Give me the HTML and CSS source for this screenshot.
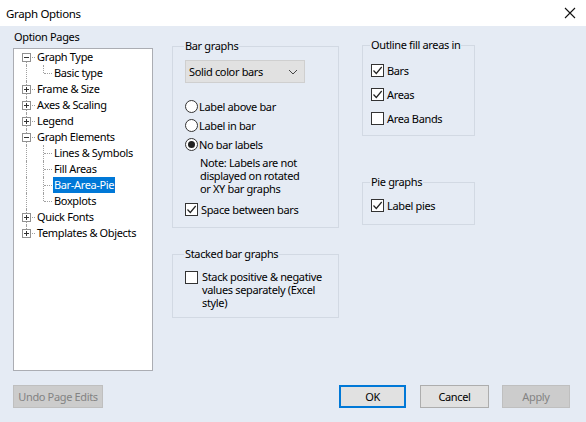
FILE: index.html
```html
<!DOCTYPE html>
<html>
<head>
<meta charset="utf-8">
<title>Graph Options</title>
<link rel="stylesheet" href="styles.css">
</head>
<body>
<div class="dialog">
  <div class="titlebar">
    <span class="title">Graph Options</span>
    <span class="close"><svg width="12" height="12" viewBox="0 0 12 12"><path d="M1 1 L11 11 M11 1 L1 11" stroke="#111" stroke-width="1.1" fill="none"/></svg></span>
  </div>
  <div class="main">
    <div class="left">
      <div class="pages-label">Option Pages</div>
      <div class="tree">
        <div class="row root first"><span class="g g-root"><span class="exp"><svg width="9" height="9" viewBox="0 0 9 9"><rect x="0.5" y="0.5" width="8" height="8" fill="#fff" stroke="#919191"/><path d="M2 4.5 H7" stroke="#333"/></svg></span></span><span class="lbl">Graph Type</span></div>
        <div class="row child last"><span class="g g-pass"></span><span class="g g-child"></span><span class="lbl">Basic type</span></div>
        <div class="row root"><span class="g g-root"><span class="exp"><svg width="9" height="9" viewBox="0 0 9 9"><rect x="0.5" y="0.5" width="8" height="8" fill="#fff" stroke="#919191"/><path d="M2 4.5 H7 M4.5 2 V7" stroke="#333"/></svg></span></span><span class="lbl">Frame &amp; Size</span></div>
        <div class="row root"><span class="g g-root"><span class="exp"><svg width="9" height="9" viewBox="0 0 9 9"><rect x="0.5" y="0.5" width="8" height="8" fill="#fff" stroke="#919191"/><path d="M2 4.5 H7 M4.5 2 V7" stroke="#333"/></svg></span></span><span class="lbl">Axes &amp; Scaling</span></div>
        <div class="row root"><span class="g g-root"><span class="exp"><svg width="9" height="9" viewBox="0 0 9 9"><rect x="0.5" y="0.5" width="8" height="8" fill="#fff" stroke="#919191"/><path d="M2 4.5 H7 M4.5 2 V7" stroke="#333"/></svg></span></span><span class="lbl">Legend</span></div>
        <div class="row root"><span class="g g-root"><span class="exp"><svg width="9" height="9" viewBox="0 0 9 9"><rect x="0.5" y="0.5" width="8" height="8" fill="#fff" stroke="#919191"/><path d="M2 4.5 H7" stroke="#333"/></svg></span></span><span class="lbl">Graph Elements</span></div>
        <div class="row child"><span class="g g-pass"></span><span class="g g-child"></span><span class="lbl">Lines &amp; Symbols</span></div>
        <div class="row child"><span class="g g-pass"></span><span class="g g-child"></span><span class="lbl">Fill Areas</span></div>
        <div class="row child"><span class="g g-pass"></span><span class="g g-child"></span><span class="lbl sel">Bar-Area-Pie</span></div>
        <div class="row child last"><span class="g g-pass"></span><span class="g g-child"></span><span class="lbl">Boxplots</span></div>
        <div class="row root"><span class="g g-root"><span class="exp"><svg width="9" height="9" viewBox="0 0 9 9"><rect x="0.5" y="0.5" width="8" height="8" fill="#fff" stroke="#919191"/><path d="M2 4.5 H7 M4.5 2 V7" stroke="#333"/></svg></span></span><span class="lbl">Quick Fonts</span></div>
        <div class="row root last"><span class="g g-root"><span class="exp"><svg width="9" height="9" viewBox="0 0 9 9"><rect x="0.5" y="0.5" width="8" height="8" fill="#fff" stroke="#919191"/><path d="M2 4.5 H7 M4.5 2 V7" stroke="#333"/></svg></span></span><span class="lbl">Templates &amp; Objects</span></div>
      </div>
    </div>

    <div class="col mid">
      <fieldset class="grp bar">
        <legend>Bar graphs</legend>
        <div class="select"><span>Solid color bars</span><svg width="10" height="6" viewBox="0 0 10 6"><path d="M1 1 L5 5 L9 1" stroke="#444" fill="none"/></svg></div>
        <div class="radios">
          <div class="opt radio-row"><span class="radio"></span><span>Label above bar</span></div>
          <div class="opt radio-row"><span class="radio"></span><span>Label in bar</span></div>
          <div class="opt radio-row"><span class="radio on"></span><span>No bar labels</span></div>
        </div>
        <div class="note">Note: Labels are not<br>displayed on rotated<br>or XY bar graphs</div>
        <div class="opt check-row space"><span class="check on"><svg width="11" height="11" viewBox="0 0 11 11"><path d="M1.5 5.5 L4.3 8.5 L9.7 2" stroke="#222" stroke-width="1.2" fill="none"/></svg></span><span>Space between bars</span></div>
      </fieldset>
      <fieldset class="grp stacked">
        <legend>Stacked bar graphs</legend>
        <div class="opt multi"><span class="check"></span><span class="mtext">Stack positive &amp; negative<br>values separately (Excel<br>style)</span></div>
      </fieldset>
    </div>

    <div class="col right">
      <fieldset class="grp outline">
        <legend>Outline fill areas in</legend>
        <div class="opt check-row tall"><span class="check on"><svg width="11" height="11" viewBox="0 0 11 11"><path d="M1.5 5.5 L4.3 8.5 L9.7 2" stroke="#222" stroke-width="1.2" fill="none"/></svg></span><span>Bars</span></div>
        <div class="opt check-row tall"><span class="check on"><svg width="11" height="11" viewBox="0 0 11 11"><path d="M1.5 5.5 L4.3 8.5 L9.7 2" stroke="#222" stroke-width="1.2" fill="none"/></svg></span><span>Areas</span></div>
        <div class="opt check-row tall"><span class="check"></span><span>Area Bands</span></div>
      </fieldset>
      <fieldset class="grp pie">
        <legend>Pie graphs</legend>
        <div class="opt check-row tall"><span class="check on"><svg width="11" height="11" viewBox="0 0 11 11"><path d="M1.5 5.5 L4.3 8.5 L9.7 2" stroke="#222" stroke-width="1.2" fill="none"/></svg></span><span>Label pies</span></div>
      </fieldset>
    </div>
  </div>
  <div class="footer">
    <button class="btn undo" disabled>Undo Page Edits</button>
    <div class="spacer"></div>
    <button class="btn ok">OK</button>
    <button class="btn cancel">Cancel</button>
    <button class="btn apply" disabled>Apply</button>
  </div>
</div>
</body>
</html>
```

FILE: styles.css
```css
* { box-sizing: border-box; }
html, body { margin: 0; padding: 0; }
body {
  width: 586px;
  height: 422px;
  overflow: hidden;
  font-family: "Noto Sans", "DejaVu Sans", sans-serif;
  font-size: 11px;
  letter-spacing: -0.35px;
  color: #000;
  background: #e5ebf4;
}
.dialog {
  width: 586px;
  height: 422px;
  display: flex;
  flex-direction: column;
  background: #e5ebf4;
}
.titlebar {
  height: 26px;
  flex: none;
  background: #fff;
  display: flex;
  align-items: center;
  padding: 0 10px 0 6px;
}
.title { flex: 1; font-size: 11.5px; }
.close { display: flex; width: 12px; height: 12px; }

.main {
  display: flex;
  padding: 3px 0 0 13px;
  height: 359px;
  flex: none;
}
.left { width: 140px; flex: none; }
.pages-label { height: 16px; line-height: 16px; padding-left: 1px; }
.tree {
  margin-top: 3px;
  height: 323px;
  background: #fff;
  border: 1px solid #abadb3;
}
.row {
  display: flex;
  height: 16px;
  line-height: 16px;
  white-space: nowrap;
}
.g { position: relative; flex: none; height: 16px; }
.g-root, .g-pass { width: 22px; }
.g-child { width: 17px; }
.g-root::before, .g-pass::before {
  content: "";
  position: absolute;
  left: 12px;
  top: 0;
  bottom: 0;
  border-left: 1px dotted #a0a0a0;
}
.root.first .g-root::before { top: 8px; }
.root.last .g-root::before { bottom: 8px; }
.g-root::after {
  content: "";
  position: absolute;
  left: 13px;
  width: 8px;
  top: 8px;
  border-top: 1px dotted #a0a0a0;
}
.exp {
  position: absolute;
  left: 8px;
  top: 4px;
  width: 9px;
  height: 9px;
  display: flex;
  z-index: 1;
}
.g-child::before {
  content: "";
  position: absolute;
  left: 7px;
  top: 0;
  bottom: 0;
  border-left: 1px dotted #a0a0a0;
}
.child.last .g-child::before { bottom: 8px; }
.g-child::after {
  content: "";
  position: absolute;
  left: 8px;
  width: 8px;
  top: 8px;
  border-top: 1px dotted #a0a0a0;
}
.lbl { padding: 0 1px; height: 16px; }
.lbl.sel { background: #0078d7; color: #fff; }

.col { display: flex; flex-direction: column; flex: none; }
.mid { width: 167px; margin-left: 19px; }
.right { width: 113px; margin-left: 23px; }

.grp {
  margin: 0;
  border: 1px solid #d2d9e3;
  min-width: 0;
}
.grp legend {
  padding: 0 1px;
  margin-left: -1px;
  height: 16px;
  line-height: 16px;
  white-space: nowrap;
}
.bar { margin-top: 9px; padding: 6px 8px 9px 12px; }
.stacked { margin-top: 18px; padding: 8px 8px 8px 12px; }
.outline { margin-top: 8px; padding: 5px 6px 5px 8px; }
.pie { margin-top: 38px; padding: 3px 6px 7px 8px; }

.select {
  width: 120px;
  height: 23px;
  background: #e1e1e1;
  border: 1px solid #cfcfcf;
  display: flex;
  align-items: center;
  justify-content: space-between;
  padding: 0 6px 0 3px;
}
.radios { margin-top: 14px; }
.opt { display: flex; align-items: center; white-space: nowrap; }
.radio-row { height: 19px; }
.radio {
  width: 13px;
  height: 13px;
  border: 1px solid #333;
  border-radius: 50%;
  background: #fff;
  margin-right: 1px;
  display: flex;
  align-items: center;
  justify-content: center;
  flex: none;
}
.radio.on::after {
  content: "";
  width: 7px;
  height: 7px;
  border-radius: 50%;
  background: #222;
}
.note {
  margin-top: 2px;
  padding-left: 15px;
  line-height: 13px;
}
.check-row { height: 18px; }
.check-row.tall { height: 24px; }
.space { margin-top: 5px; }
.check {
  width: 13px;
  height: 13px;
  border: 1px solid #333;
  background: #fff;
  margin-right: 3px;
  display: flex;
  align-items: center;
  justify-content: center;
  flex: none;
}
.multi { align-items: flex-start; }
.multi .check { margin-top: 1px; margin-right: 4px; }
.mtext { line-height: 13px; }

.footer {
  display: flex;
  padding: 0 16px 0 13px;
  height: 23px;
}
.spacer { flex: 1; }
.btn {
  font-family: inherit;
  font-size: 11px;
  letter-spacing: -0.35px;
  height: 23px;
  border: 1px solid #adadad;
  background: #e1e1e1;
  color: #000;
  padding: 0;
  margin: 0;
  white-space: nowrap;
}
.undo { width: 90px; background: #cccccc; border-color: #bfbfbf; color: #838383; }
.ok { width: 67px; border: 2px solid #0078d7; }
.cancel { width: 69px; margin-left: 14px; }
.apply { width: 68px; margin-left: 13px; background: #cccccc; border-color: #bfbfbf; color: #838383; }
```
